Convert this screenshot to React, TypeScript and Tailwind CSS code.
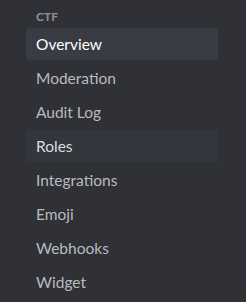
const items = [
  { name: 'Overview', state: 'selected' },
  { name: 'Moderation', state: '' },
  { name: 'Audit Log', state: '' },
  { name: 'Roles', state: 'hover' },
  { name: 'Integrations', state: '' },
  { name: 'Emoji', state: '' },
  { name: 'Webhooks', state: '' },
  { name: 'Widget', state: '' },
];

export default function App() {
  return (
    <div className="h-[302px] w-[246px] overflow-hidden bg-[#2f3136] pl-[26px] pr-[28px] pt-[9px] font-['Lato',sans-serif]">
      <div className="px-[10px] pb-[3px] text-[12px] font-bold uppercase leading-[16px] text-[#8e9297]">
        CTF
      </div>
      <div className="flex flex-col gap-[2px]">
        {items.map((item) => (
          <div
            key={item.name}
            className={`rounded-[4px] px-[10px] py-[6px] text-[15.5px] leading-[20px] ${
              item.state === 'selected'
                ? 'bg-[#393c43] text-white'
                : item.state === 'hover'
                  ? 'bg-[#33363c] text-[#dcddde]'
                  : 'text-[#b9bbbe]'
            }`}
          >
            {item.name}
          </div>
        ))}
      </div>
    </div>
  );
}
